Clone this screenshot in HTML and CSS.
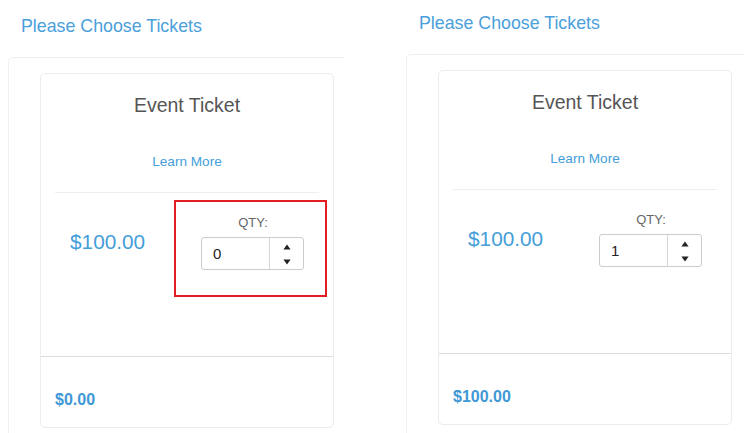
FILE: index.html
```html
<!DOCTYPE html>
<html>
<head>
<meta charset="utf-8">
<link rel="stylesheet" href="styles.css">
</head>
<body>
<div class="page">
  <div class="shot">
    <h2 class="title">Please Choose Tickets</h2>
    <div class="panel">
      <div class="card">
        <div class="card-body">
          <h3 class="name">Event Ticket</h3>
          <a class="learn">Learn More</a>
          <hr class="rule">
          <div class="row">
            <div class="col price">$100.00</div>
            <div class="col qty">
              <div class="qty-label">QTY:</div>
              <div class="spinner">
                <span class="val">0</span>
                <span class="arrows">
                  <svg width="8" height="6" viewBox="0 0 8 6"><path d="M4 0.5 L7.6 5.5 L0.4 5.5 Z" fill="#222"/></svg>
                  <svg width="8" height="6" viewBox="0 0 8 6"><path d="M0.4 0.5 L7.6 0.5 L4 5.5 Z" fill="#222"/></svg>
                </span>
              </div>
            </div>
            <div class="mark"></div>
          </div>
        </div>
        <div class="card-foot"><strong class="total">$0.00</strong></div>
      </div>
    </div>
  </div>
  <div class="shot shot-b">
    <h2 class="title">Please Choose Tickets</h2>
    <div class="panel">
      <div class="card">
        <div class="card-body">
          <h3 class="name">Event Ticket</h3>
          <a class="learn">Learn More</a>
          <hr class="rule">
          <div class="row">
            <div class="col price">$100.00</div>
            <div class="col qty">
              <div class="qty-label">QTY:</div>
              <div class="spinner">
                <span class="val">1</span>
                <span class="arrows">
                  <svg width="8" height="6" viewBox="0 0 8 6"><path d="M4 0.5 L7.6 5.5 L0.4 5.5 Z" fill="#222"/></svg>
                  <svg width="8" height="6" viewBox="0 0 8 6"><path d="M0.4 0.5 L7.6 0.5 L4 5.5 Z" fill="#222"/></svg>
                </span>
              </div>
            </div>
          </div>
        </div>
        <div class="card-foot"><strong class="total">$100.00</strong></div>
      </div>
    </div>
  </div>
</div>
</body>
</html>
```

FILE: styles.css
```css
* { box-sizing: border-box; }
html, body { margin: 0; padding: 0; background: #fff; }
body {
  font-family: "Liberation Sans", Arial, sans-serif;
  color: #333;
  width: 752px;
  height: 433px;
  overflow: hidden;
}
.page {
  display: flex;
  gap: 53px;
  height: 433px;
}
.shot {
  width: 345px;
  height: 440px;
  overflow: hidden;
  flex: none;
}
.shot-b {
  width: 346px;
  margin-top: -3px;
}
.title {
  margin: 16px 0 0 21px;
  font-size: 17.8px;
  line-height: 20px;
  font-weight: normal;
  color: #4aa0db;
}
.panel {
  margin: 21px 0 0 8px;
  width: 380px;
  border: 1px solid #f0f0f0;
  border-radius: 5px;
  padding: 15px 0 30px 31px;
}
.card {
  width: 294px;
  border: 1px solid #ececec;
  border-radius: 5px;
  background: #fff;
}
.card-body {
  height: 282px;
  padding: 20px 14px 0;
  text-align: center;
}
.name {
  margin: 0;
  font-size: 19.5px;
  line-height: 22px;
  font-weight: normal;
  color: #555;
}
.learn {
  display: block;
  margin-top: 37.5px;
  font-size: 13.6px;
  line-height: 16px;
  color: #449ed9;
}
.rule {
  margin: 22.5px 0 0;
  border: 0;
  border-top: 1px solid #eeeeee;
  height: 0;
}
.row {
  position: relative;
  display: grid;
  grid-template-columns: 1fr 1fr;
}
.col {
  padding: 0 15px;
}
.price {
  text-align: left;
  padding-top: 37px;
  font-size: 20.8px;
  line-height: 24px;
  color: #449ed9;
}
.qty {
  padding-top: 22px;
}
.qty-label {
  font-size: 13px;
  line-height: 16px;
  color: #666;
}
.spinner {
  margin: 6px 0 0 -1px;
  display: flex;
  height: 33px;
  border: 1px solid #cccccc;
  border-radius: 3px;
  text-align: left;
}
.val {
  width: 68px;
  padding-left: 11px;
  font-size: 15px;
  line-height: 31px;
  color: #222;
  border-right: 1px solid #d6d6d6;
}
.arrows {
  flex: 1;
  display: flex;
  flex-direction: column;
  align-items: center;
  justify-content: center;
  gap: 9px;
  padding-top: 1px;
}
.arrows svg { display: block; }
.mark {
  position: absolute;
  left: 119px;
  top: 7px;
  width: 153px;
  height: 97px;
  border: 2.3px solid #e41d25;
}
.card-foot {
  height: 71px;
  border-top: 1px solid #dddddd;
  padding: 34px 14px 0;
}
.total {
  font-size: 16px;
  line-height: 18px;
  font-weight: bold;
  color: #3f98d6;
}
```
